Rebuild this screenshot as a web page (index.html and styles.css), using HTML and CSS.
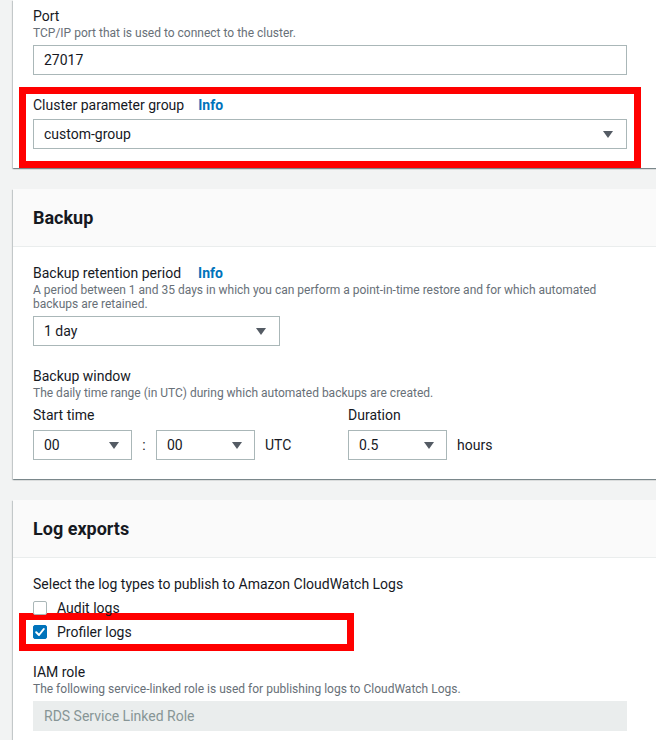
FILE: index.html
```html
<!DOCTYPE html>
<html lang="en">
<head>
<meta charset="utf-8">
<title>Cluster settings</title>
<link rel="stylesheet" href="styles.css">
</head>
<body>
<div class="page">
  <section class="card card-first">
    <div class="card-body body-first">
      <div class="field">
        <div class="label">Port</div>
        <div class="desc">TCP/IP port that is used to connect to the cluster.</div>
        <div class="control input w-wide">27017</div>
      </div>
      <div class="mark mark-field">
        <div class="label">Cluster parameter group<a class="info" href="#">Info</a></div>
        <div class="control select w-wide"><span>custom-group</span><svg class="caret" width="10" height="7" viewBox="0 0 10 7"><polygon points="0,0 10,0 5,7" fill="#545b64"/></svg></div>
      </div>
    </div>
  </section>

  <section class="card">
    <header class="card-header"><h2>Backup</h2></header>
    <div class="card-body">
      <div class="field">
        <div class="label">Backup retention period<a class="info info-wide" href="#">Info</a></div>
        <div class="desc">A period between 1 and 35 days in which you can perform a point-in-time restore and for which automated backups are retained.</div>
        <div class="control select w-mid"><span>1 day</span><svg class="caret" width="10" height="7" viewBox="0 0 10 7"><polygon points="0,0 10,0 5,7" fill="#545b64"/></svg></div>
      </div>
      <div class="field field-gap">
        <div class="label">Backup window</div>
        <div class="desc">The daily time range (in UTC) during which automated backups are created.</div>
        <div class="window">
          <div class="window-start">
            <div class="label sub-label">Start time</div>
            <div class="window-row">
              <div class="control select w-small"><span>00</span><svg class="caret" width="10" height="7" viewBox="0 0 10 7"><polygon points="0,0 10,0 5,7" fill="#545b64"/></svg></div>
              <span class="colon">:</span>
              <div class="control select w-small"><span>00</span><svg class="caret" width="10" height="7" viewBox="0 0 10 7"><polygon points="0,0 10,0 5,7" fill="#545b64"/></svg></div>
              <span class="unit">UTC</span>
            </div>
          </div>
          <div class="window-duration">
            <div class="label sub-label">Duration</div>
            <div class="window-row">
              <div class="control select w-small"><span>0.5</span><svg class="caret" width="10" height="7" viewBox="0 0 10 7"><polygon points="0,0 10,0 5,7" fill="#545b64"/></svg></div>
              <span class="unit">hours</span>
            </div>
          </div>
        </div>
      </div>
    </div>
  </section>

  <section class="card">
    <header class="card-header"><h2>Log exports</h2></header>
    <div class="card-body">
      <div class="field">
        <div class="label">Select the log types to publish to Amazon CloudWatch Logs</div>
        <div class="checks">
          <label class="check-row"><span class="checkbox"></span><span class="check-text">Audit logs</span></label>
          <label class="check-row mark mark-row"><span class="checkbox checked"><svg width="14" height="14" viewBox="0 0 14 14"><polyline points="3.2,7.2 6,10 10.8,4" fill="none" stroke="#ffffff" stroke-width="2" stroke-linecap="round" stroke-linejoin="round"/></svg></span><span class="check-text">Profiler logs</span></label>
        </div>
      </div>
      <div class="field field-iam">
        <div class="label">IAM role</div>
        <div class="desc">The following service-linked role is used for publishing logs to CloudWatch Logs.</div>
        <div class="control input disabled w-wide">RDS Service Linked Role</div>
      </div>
    </div>
  </section>
</div>
</body>
</html>
```

FILE: styles.css
```css
html, body {
  margin: 0;
  padding: 0;
  overflow: hidden;
}
body {
  background: #f2f3f3;
  font-family: Roboto, "Liberation Sans", sans-serif;
  color: #16191f;
  font-size: 14px;
}
.page {
  width: 720px;
  padding-left: 13px;
}
.card {
  background: #ffffff;
  box-shadow: 0 1px 1px 0 rgba(0, 28, 36, 0.3), 1px 1px 1px 0 rgba(0, 28, 36, 0.15), -1px 1px 1px 0 rgba(0, 28, 36, 0.15);
  margin-top: 21px;
}
.card-first {
  margin-top: 0;
}
.card-header {
  height: 57px;
  border-bottom: 1px solid #eaeded;
  background: #fafafa;
  display: flex;
  align-items: center;
  padding: 0 20px;
}
.card-header h2 {
  margin: 0;
  font-size: 18px;
  font-weight: 700;
  line-height: 22px;
  color: #16191f;
}
.card-body {
  padding: 16px 20px 19px;
}
.body-first {
  padding: 6px 20px 0;
}
.field {
  width: 600px;
}
.label {
  font-size: 14px;
  line-height: 20px;
  color: #16191f;
}
.info {
  color: #0073bb;
  font-weight: 700;
  text-decoration: none;
  margin-left: 14px;
}
.info-wide {
  margin-left: 17px;
}
.desc {
  font-size: 12px;
  line-height: 14px;
  color: #687078;
}
.control {
  box-sizing: border-box;
  height: 30px;
  border: 1px solid #aab7b8;
  background: #ffffff;
  font-size: 14px;
  color: #16191f;
  display: flex;
  align-items: center;
  padding: 0 13px 0 10px;
  margin-top: 4px;
}
.desc + .control {
  margin-top: 5px;
}
.select {
  justify-content: space-between;
}
.w-wide { width: 594px; }
.w-mid { width: 247px; }
.w-small { width: 99px; padding-right: 12px; }
.disabled {
  background: #eaeded;
  border-color: #eaeded;
  color: #879596;
}
.mark {
  border: 7px solid #ff0000;
  box-sizing: border-box;
}
.mark-field {
  width: 622px;
  margin: 12px 0 0 -14px;
  padding: 1px 7px 12px;
}
.field-gap {
  margin-top: 20px;
}
.window {
  display: flex;
  margin-top: 5px;
}
.window-start {
  width: 315px;
}
.sub-label {
  line-height: 20px;
}
.window-row {
  display: flex;
  align-items: center;
  margin-top: 5px;
}
.window-row .control {
  margin-top: 0;
}
.colon {
  width: 24px;
  text-align: center;
}
.unit {
  margin-left: 10px;
}
.checks {
  margin-top: 2px;
}
.check-row {
  display: flex;
  align-items: center;
  height: 24px;
}
.mark-row {
  box-sizing: content-box;
  width: 314px;
  margin: -7px 0 -7px -14px;
  padding-left: 7px;
}
.checkbox {
  box-sizing: border-box;
  width: 14px;
  height: 14px;
  border: 1px solid #aab7b8;
  border-radius: 2px;
  background: #ffffff;
  display: flex;
}
.checkbox.checked {
  background: #0073bb;
  border-color: #0073bb;
}
.checkbox.checked svg {
  margin: -1px;
}
.check-text {
  margin-left: 10px;
  color: #16191f;
}
.field-iam {
  margin-top: 18px;
}
```
